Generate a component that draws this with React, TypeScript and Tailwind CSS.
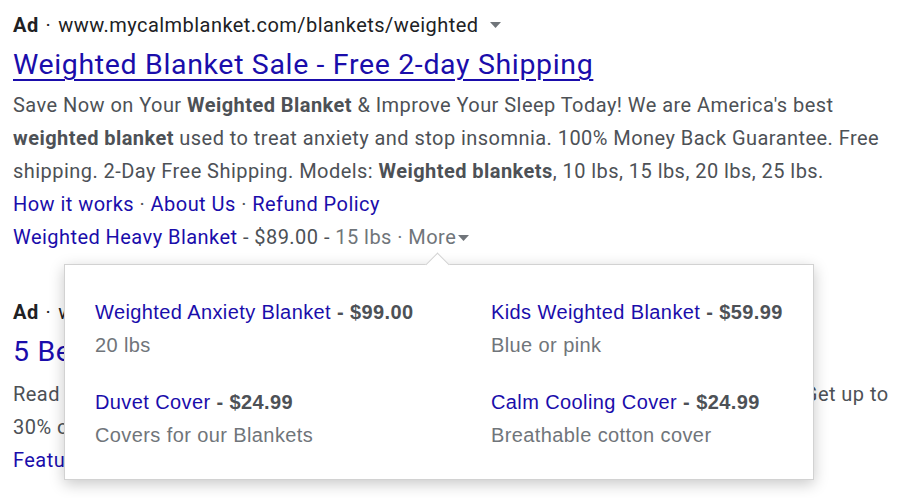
import React from 'react';

const roboto = { fontFamily: 'Roboto, "Liberation Sans", Arial, sans-serif' };

function Caret({ className = '' }: { className?: string }) {
  return (
    <svg width="11" height="6" viewBox="0 0 11 6" className={className}>
      <path d="M0 0h11L5.5 6z" fill="#70757a" />
    </svg>
  );
}

function PopupItem({ title, price, sub }: { title: string; price: string; sub: string }) {
  return (
    <div>
      <div className="leading-[33px]">
        <span className="text-[#1a0dab]">{title}</span>
        <span className="text-[#4d5156] font-bold"> - {price}</span>
      </div>
      <div className="leading-[33px] text-[#70757a]">{sub}</div>
    </div>
  );
}

function MorePopup() {
  return (
    <div className="absolute left-[64px] top-[264px] w-[750px] h-[216px] bg-white border border-[#d2d2d2] shadow-[0_4px_14px_rgba(0,0,0,0.22)] font-['Liberation_Sans',Arial,sans-serif] text-[20px] tracking-[0.4px]">
      <div className="absolute -top-[9px] left-[364px] w-[17px] h-[17px] bg-white border-l border-t border-[#d2d2d2] rotate-45" />
      <div className="grid grid-cols-[396px_1fr] gap-y-[24px] pl-[30px] pt-[31px]">
        <PopupItem title="Weighted Anxiety Blanket" price="$99.00" sub="20 lbs" />
        <PopupItem title="Kids Weighted Blanket" price="$59.99" sub="Blue or pink" />
        <PopupItem title="Duvet Cover" price="$24.99" sub="Covers for our Blankets" />
        <PopupItem title="Calm Cooling Cover" price="$24.99" sub="Breathable cotton cover" />
      </div>
    </div>
  );
}

export default function App() {
  return (
    <div className="relative w-[910px] h-[498px] overflow-hidden bg-white" style={roboto}>
      <div className="pl-[13px] pt-[12px] tracking-[0.45px]">
        {/* first ad */}
        <div className="flex items-center text-[20px] leading-[26px] text-[#202124]">
          <span className="font-bold">Ad</span>
          <span className="mx-[7px]">·</span>
          <span>www.mycalmblanket.com/blankets/weighted</span>
          <Caret className="ml-[11px]" />
        </div>
        <div className="text-[28.5px] leading-[38px] mt-[8px] text-[#1a0dab] tracking-[0.65px] underline underline-offset-[5px] decoration-[2px]">
          Weighted Blanket Sale - Free 2-day Shipping
        </div>
        <div className="text-[20px] leading-[33px] text-[#4d5156] mt-[5px]">
          Save Now on Your <b>Weighted Blanket</b> &amp; Improve Your Sleep Today! We are America's best
          <br />
          <b>weighted blanket</b> used to treat anxiety and stop insomnia. 100% Money Back Guarantee. Free
          <br />
          shipping. 2-Day Free Shipping. Models: <b>Weighted blankets</b>, 10 lbs, 15 lbs, 20 lbs, 25 lbs.
        </div>
        <div className="text-[20px] leading-[33px] text-[#1a0dab]">
          How it works <span className="text-[#4d5156]">·</span> About Us{' '}
          <span className="text-[#4d5156]">·</span> Refund Policy
        </div>
        <div className="flex items-center text-[20px] leading-[33px]">
          <span className="text-[#1a0dab]">Weighted Heavy Blanket</span>
          <span className="text-[#4d5156] whitespace-pre"> - $89.00 - </span>
          <span className="text-[#70757a] whitespace-pre">15 lbs · More</span>
          <Caret className="ml-[2px]" />
        </div>

        {/* second ad, mostly hidden behind the popup */}
        <div className="mt-[45px] flex items-center text-[20px] leading-[26px] text-[#202124]">
          <span className="font-bold">Ad</span>
          <span className="mx-[7px]">·</span>
          <span>www.sleepreviewsguide.com/best/weighted-blankets</span>
        </div>
        <div className="text-[28.5px] leading-[38px] mt-[8px] text-[#1a0dab] tracking-[0.65px]">
          5 Best Weighted Blankets of 2020 - Top Rated Picks
        </div>
        <div className="text-[20px] leading-[33px] text-[#4d5156] mt-[7px] whitespace-nowrap">
          Read our in-depth reviews of the best weighted blankets for anxiety and better sleep. Get up to
          <br />
          30% off the top rated weighted blankets this week only with free shipping and returns.
        </div>
        <div className="text-[20px] leading-[33px] text-[#1a0dab]">
          Features <span className="text-[#4d5156]">·</span> Compare Blankets{' '}
          <span className="text-[#4d5156]">·</span> Reviews
        </div>
      </div>
      <MorePopup />
    </div>
  );
}
